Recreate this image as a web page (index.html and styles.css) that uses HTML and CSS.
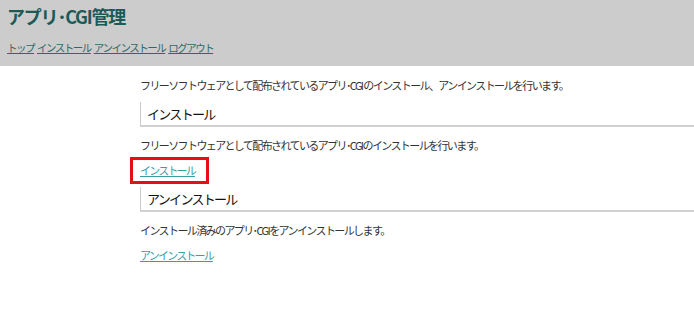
FILE: index.html
```html
<!DOCTYPE html>
<html lang="ja">
<head>
<meta charset="utf-8">
<link rel="stylesheet" href="styles.css">
</head>
<body>
<header class="header">
  <h1 class="title">アプリ･CGI管理</h1>
  <nav class="nav">
    <a href="#">トップ</a>
    <a href="#">インストール</a>
    <a href="#">アンインストール</a>
    <a href="#">ログアウト</a>
  </nav>
</header>
<main class="content">
  <p class="text lead">フリーソフトウェアとして配布されているアプリ･CGI のインストール、アンインストールを行います。</p>
  <h2 class="section">インストール</h2>
  <p class="text">フリーソフトウェアとして配布されているアプリ･CGIのインストールを行います。</p>
  <p class="linkrow"><a class="link highlight" href="#">インストール</a></p>
  <h2 class="section">アンインストール</h2>
  <p class="text">インストール済みのアプリ･CGIをアンインストールします。</p>
  <p class="linkrow"><a class="link" href="#">アンインストール</a></p>
</main>
</body>
</html>
```
FILE: styles.css
```css
html, body {
  margin: 0;
  padding: 0;
  background: #ffffff;
}
body {
  font-family: "Noto Sans CJK JP", "Liberation Sans", sans-serif;
  color: #333333;
  font-size: 12px;
}
.header {
  background: #cccccc;
  height: 66px;
  padding: 4px 0 0 7px;
  box-sizing: border-box;
}
.title {
  margin: 0;
  font-size: 18px;
  line-height: 24px;
  font-weight: bold;
  color: #1c5a58;
  letter-spacing: -1.2px;
}
.nav {
  margin-top: 13px;
  display: flex;
  gap: 3px;
  font-size: 10.5px;
  line-height: 14px;
  letter-spacing: -1.5px;
}
.nav a {
  color: #2f6a6a;
  text-decoration: underline;
}
.content {
  padding: 11px 0 0 140px;
}
.text {
  margin: 0;
  font-size: 11px;
  line-height: 16px;
  letter-spacing: -1.6px;
  color: #333333;
}
.lead {
  margin-bottom: 9px;
}
.section {
  margin: 0 0 10px 0;
  font-size: 13px;
  font-weight: normal;
  line-height: 22px;
  padding: 1px 6px 0;
  letter-spacing: -1.7px;
  color: #111111;
  border-left: 1px solid #cccccc;
  border-bottom: 2px solid #d0d0d0;
}
.linkrow {
  margin: 0;
  padding: 9px 0 9px;
  line-height: 16px;
}
.link {
  font-size: 11px;
  letter-spacing: -1.8px;
  color: #3a9ea0;
  text-decoration: underline;
}
.highlight {
  position: relative;
}
.highlight::after {
  content: "";
  position: absolute;
  left: -10px;
  top: -5px;
  right: -14px;
  bottom: -6px;
  border: 3px solid #e3101a;
}
```
